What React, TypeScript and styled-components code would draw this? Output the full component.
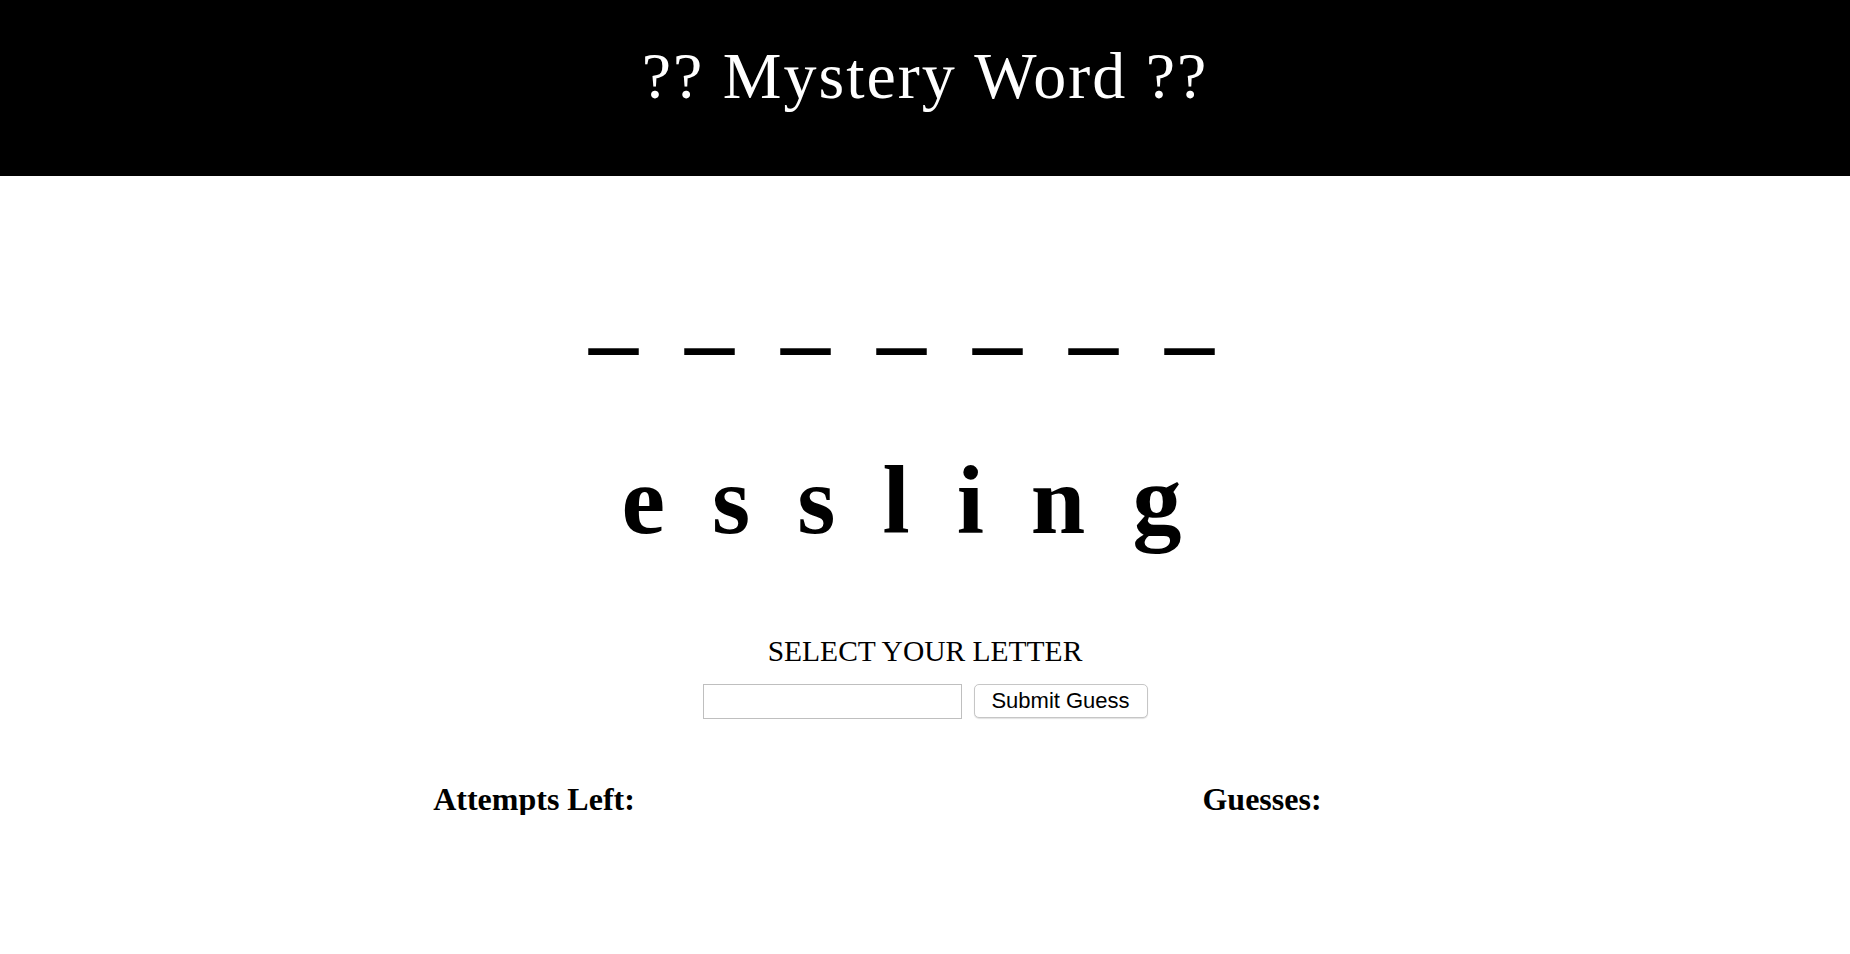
import React from "react";
import styled, { createGlobalStyle } from "styled-components";

const GlobalStyle = createGlobalStyle`
  html, body {
    margin: 0;
    padding: 0;
    background: #ffffff;
  }
  body {
    font-family: "Liberation Serif", "Times New Roman", serif;
    color: #000;
  }
`;

const Header = styled.header`
  box-sizing: border-box;
  height: 176px;
  padding-top: 43px;
  background: #000;
  text-align: center;
`;

const Title = styled.h1`
  margin: 0;
  font-family: "Liberation Serif", serif;
  font-weight: normal;
  font-size: 66px;
  line-height: 1;
  letter-spacing: 2px;
  color: #fff;
`;

const Main = styled.main`
  display: flex;
  flex-direction: column;
  align-items: center;
`;

const CharRow = styled.div<{ $top: number }>`
  display: flex;
  justify-content: center;
  margin-top: ${(p) => p.$top}px;
  font-family: "Liberation Serif", serif;
  font-weight: bold;
  font-size: 98px;
  line-height: 1;
`;

const Char = styled.span`
  margin-right: 47px;
`;

const Prompt = styled.h3`
  margin: 88px 0 0;
  font-family: "Liberation Serif", serif;
  font-weight: normal;
  font-size: 29.5px;
  line-height: 1;
  text-transform: uppercase;
`;

const GuessForm = styled.form`
  display: flex;
  align-items: center;
  gap: 12px;
  margin-top: 17px;
`;

const LetterInput = styled.input`
  box-sizing: border-box;
  width: 259px;
  height: 35px;
  margin: 0;
  border: 1px solid #bfbfbf;
  border-radius: 0;
  outline: none;
  font-size: 20px;
`;

const SubmitButton = styled.button`
  box-sizing: border-box;
  width: 174px;
  height: 34px;
  margin: 0;
  padding: 0;
  background: #fff;
  border: 1px solid #c6c6c6;
  border-radius: 5px;
  box-shadow: 0 1px 1px rgba(0, 0, 0, 0.12);
  font-family: "Liberation Sans", Arial, sans-serif;
  font-size: 22px;
  color: #000;
`;

const Stats = styled.section`
  display: grid;
  grid-template-columns: 1fr 1fr;
  width: 1456px;
  margin: 64px 0 0 calc(50% - 755px);
`;

const StatLabel = styled.h2`
  margin: 0;
  text-align: center;
  font-family: "Liberation Serif", serif;
  font-weight: bold;
  font-size: 32px;
  line-height: 1;
`;

const word = ["e", "s", "s", "l", "i", "n", "g"];

export default function App() {
  return (
    <>
      <GlobalStyle />
      <Header>
        <Title>?? Mystery Word ??</Title>
      </Header>
      <Main>
        <CharRow $top={83}>
          {word.map((_, i) => (
            <Char key={i}>_</Char>
          ))}
        </CharRow>
        <CharRow $top={94}>
          {word.map((c, i) => (
            <Char key={i}>{c}</Char>
          ))}
        </CharRow>
        <Prompt>Select your letter</Prompt>
        <GuessForm onSubmit={(e) => e.preventDefault()}>
          <LetterInput type="text" />
          <SubmitButton type="submit">Submit Guess</SubmitButton>
        </GuessForm>
      </Main>
      <Stats>
        <StatLabel>Attempts Left:</StatLabel>
        <StatLabel>Guesses:</StatLabel>
      </Stats>
    </>
  );
}
